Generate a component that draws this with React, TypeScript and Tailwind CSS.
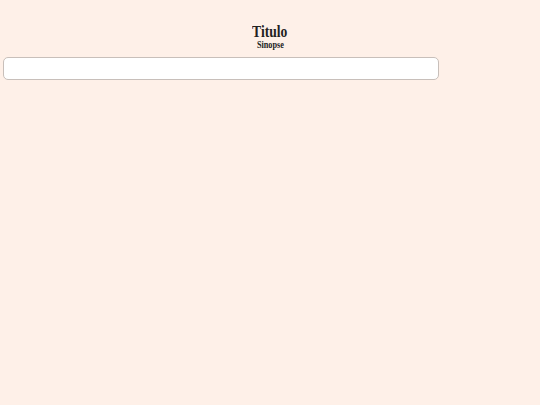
export default function App() {
  return (
    <div className="min-h-screen bg-[#fef0e8] pt-[23px] font-['Liberation_Serif',serif] text-[#222]">
      <div className="flex flex-col items-center">
        <h1 className="scale-x-[0.85] text-[16px] font-bold leading-[17px]">Titulo</h1>
        <p className="scale-x-[0.82] text-[10px] font-bold leading-[10px]">Sinopse</p>
      </div>
      <div className="mt-[7px] pl-[3px]">
        <input
          type="text"
          className="block h-[23px] w-[436px] rounded-[5px] border border-[#c8bfba] bg-white px-2 text-[12px] outline-none"
        />
      </div>
    </div>
  );
}
